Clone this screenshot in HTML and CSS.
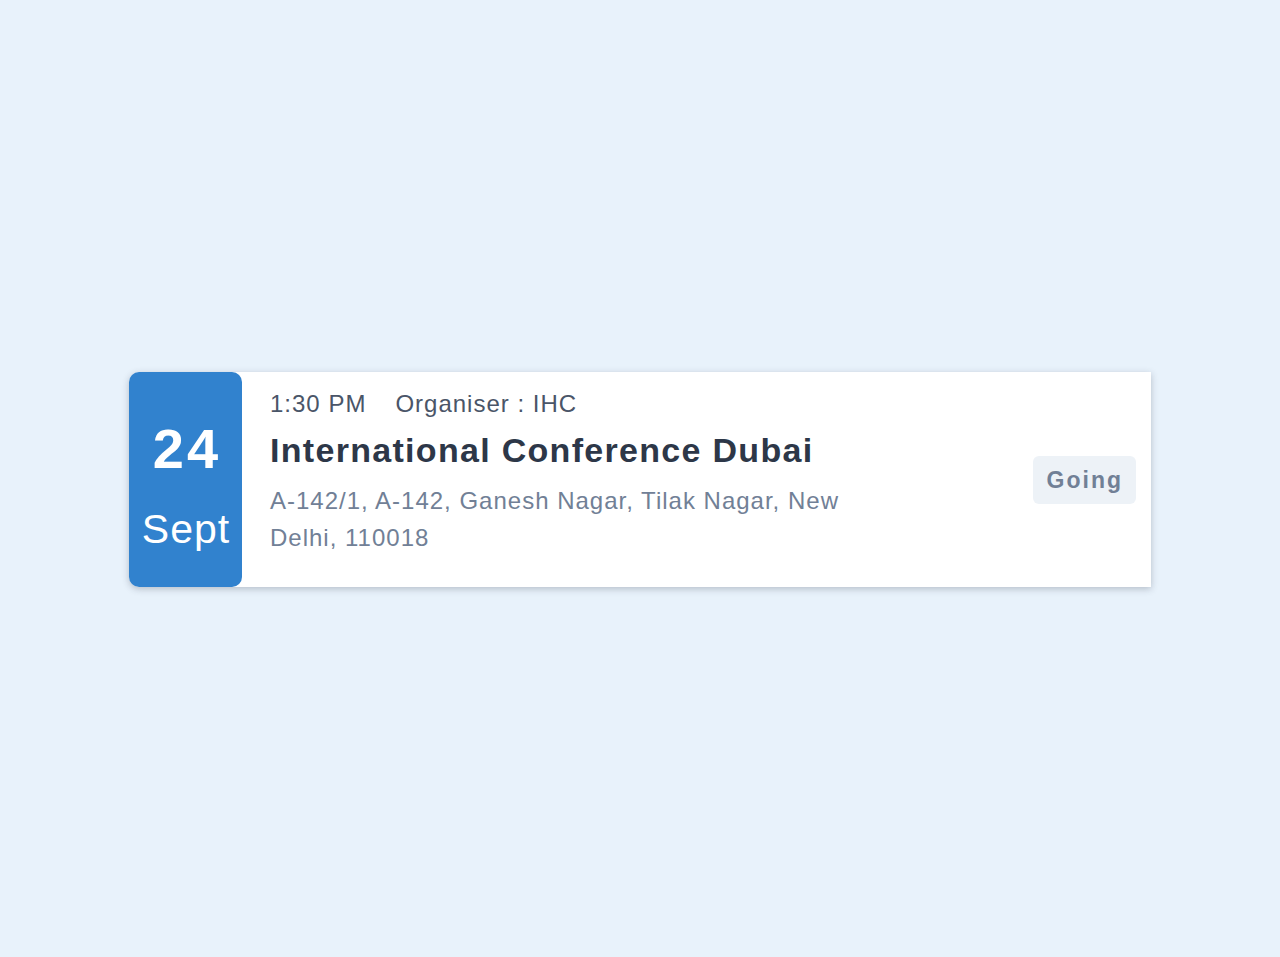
FILE: index.html
```html
<!DOCTYPE html>
<html>
<head>
<meta charset="utf-8">
<link rel="stylesheet" href="styles.css">
</head>
<body>
<div class="page">
  <div class="card">
    <div class="date">
      <div class="day">24</div>
      <div class="month">Sept</div>
    </div>
    <div class="info">
      <div class="meta"><span class="time">1:30 PM</span><span class="org">Organiser : IHC</span></div>
      <div class="title">International Conference Dubai</div>
      <div class="address">A-142/1, A-142, Ganesh Nagar, Tilak Nagar, New Delhi, 110018</div>
    </div>
    <div class="action">
      <div class="badge">Going</div>
    </div>
  </div>
</div>
</body>
</html>
```
FILE: styles.css
```css
html, body {
  margin: 0;
  padding: 0;
}
body {
  background: #e8f2fb;
  font-family: "Liberation Sans", Arial, sans-serif;
}
.page {
  height: 957px;
  display: flex;
  align-items: center;
  justify-content: center;
}
.card {
  width: 1022px;
  height: 215px;
  margin-top: 2px;
  background: #fff;
  display: flex;
  box-shadow: 0 2px 7px rgba(45, 55, 72, 0.28);
  border-radius: 10px 0 0 10px;
}
.date {
  width: 113px;
  box-sizing: border-box;
  padding-top: 10px;
  background: #3182ce;
  border-radius: 10px;
  color: #fff;
  display: flex;
  flex-direction: column;
  align-items: center;
  justify-content: center;
}
.day {
  font-size: 56px;
  font-weight: bold;
  line-height: 64px;
  letter-spacing: 3px;
  padding-left: 3px;
}
.month {
  font-size: 41px;
  line-height: 48px;
  margin-top: 24px;
  letter-spacing: 1px;
  padding-left: 1px;
}
.info {
  flex: 1;
  padding: 17px 0 0 28px;
  letter-spacing: 1px;
}
.meta {
  font-size: 24px;
  color: #4a5568;
  line-height: 30px;
}
.time {
  margin-right: 29px;
}
.title {
  font-size: 34px;
  font-weight: bold;
  color: #2d3748;
  line-height: 40px;
  margin-top: 11px;
  letter-spacing: 1.3px;
}
.address {
  font-size: 24px;
  color: #718096;
  line-height: 37px;
  margin-top: 12px;
  max-width: 620px;
}
.action {
  display: flex;
  align-items: center;
  padding-right: 15px;
}
.badge {
  background: #edf2f7;
  color: #718096;
  font-weight: bold;
  font-size: 23px;
  letter-spacing: 2px;
  padding: 10px 13px 10px 14px;
  border-radius: 6px;
  line-height: 28px;
}
```
